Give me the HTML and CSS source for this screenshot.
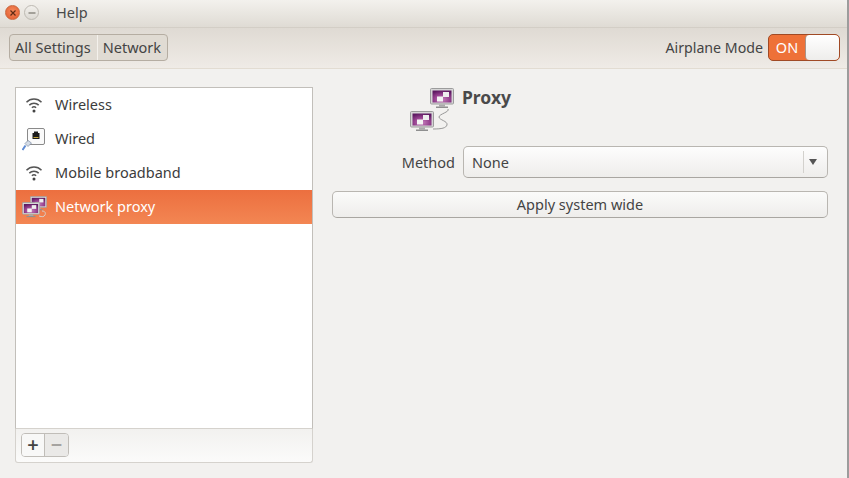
FILE: index.html
```html
<!DOCTYPE html>
<html lang="en">
<head>
<meta charset="utf-8">
<title>Network</title>
<link rel="stylesheet" href="styles.css">
</head>
<body>
<div class="window">
  <header class="titlebar">
    <span class="wbtn close"><svg width="8" height="8" viewBox="0 0 8 8"><path d="M1.500 1.500l5 5M6.500 1.500l-5 5" stroke="#5d2a14" stroke-width="1.200"/></svg></span>
    <span class="wbtn min"><svg width="8" height="8" viewBox="0 0 8 8"><path d="M0.500 4h7" stroke="#77736c" stroke-width="1.200"/></svg></span>
    <span class="menu">Help</span>
  </header>
  <div class="toolbar">
    <div class="crumbs"><span class="crumb first">All Settings</span><span class="crumb last">Network</span></div>
    <div class="airplane">
      <span class="airplane-label">Airplane Mode</span>
      <div class="switch"><span class="on">ON</span><span class="knob"></span></div>
    </div>
  </div>
  <main class="content">
    <section class="sidebar">
      <ul class="list">
        <li class="row"><span class="ico"><svg width="18" height="18" viewBox="0 0 18 18"><g fill="none" stroke="#555" stroke-width="1.500"><path d="M1.500 6.200a10.500 10.500 0 0 1 15 0"/><path d="M4.300 9.100a6.600 6.600 0 0 1 9.400 0"/><path d="M6.900 11.800a3 3 0 0 1 4.200 0"/></g><circle cx="9" cy="15" r="1.500" fill="#444"/></svg></span>Wireless</li>
        <li class="row"><span class="ico"><svg width="24" height="25" viewBox="0 0 24 25"><rect x="5.500" y="1.500" width="17" height="16" rx="1.500" fill="#fafafa" stroke="#8a8a8a"/><path d="M10.500 6h1.500V4.500h4V6h1.500v6h-7z" fill="#1c1c1c"/><path d="M11.500 10.500h5" stroke="#c9a93a"/><path d="M6 13.500l-3 3 3 3 3.500-3.500z" fill="#d5dce6" stroke="#7b8ba3" stroke-width=".7"/><path d="M3.500 18.500l-3 4.500" stroke="#5f8bd3" stroke-width="2"/></svg></span>Wired</li>
        <li class="row"><span class="ico"><svg width="18" height="18" viewBox="0 0 18 18"><g fill="none" stroke="#555" stroke-width="1.500"><path d="M1.500 6.200a10.500 10.500 0 0 1 15 0"/><path d="M4.300 9.100a6.600 6.600 0 0 1 9.400 0"/><path d="M6.900 11.800a3 3 0 0 1 4.200 0"/></g><circle cx="9" cy="15" r="1.500" fill="#444"/></svg></span>Mobile broadband</li>
        <li class="row active"><span class="ico"><svg width="26" height="26" viewBox="0 0 26 26"><use href="#mon" x="9" y="2" width="17" height="15"/><path d="M21 17c3 0 4 2 3 4s-3 2-6 1" fill="none" stroke="#d8cfc9" stroke-width="1"/><use href="#mon" x="1" y="8" width="18" height="16"/></svg></span>Network proxy</li>
      </ul>
      <div class="listbar">
        <div class="pm"><span class="pm-btn add">+</span><span class="pm-btn del">−</span></div>
      </div>
    </section>
    <section class="detail">
      <div class="head">
        <svg class="bigicon" width="44" height="46" viewBox="0 0 44 46">
          <defs>
            <radialGradient id="scr" cx=".5" cy=".75" r=".75"><stop offset="0" stop-color="#c67fbc"/><stop offset=".55" stop-color="#96418f"/><stop offset="1" stop-color="#5e1a62"/></radialGradient>
            <symbol id="mon" viewBox="0 0 24 21">
              <rect x=".5" y=".5" width="23" height="15.500" rx="1" fill="#d6d6d6" stroke="#9c9c9c"/>
              <rect x="2.500" y="2.500" width="19" height="12" fill="url(#scr)"/>
              <rect x="13" y="4" width="6" height="5" fill="#eee"/>
              <rect x="7" y="8.500" width="6" height="5" fill="#f4f4f4"/>
              <rect x="9" y="16.500" width="6" height="2" fill="#aaa"/>
              <rect x="6" y="18.500" width="12" height="1.500" fill="#8f8f8f"/>
            </symbol>
          </defs>
          <use href="#mon" x="20" y="1" width="24" height="21"/>
          <path d="M38 22c2 3-9 5-9 8s9 4 8 8c-1 3-5 4-14 4" fill="none" stroke="#8d8d8d" stroke-width=".9"/>
          <use href="#mon" x="0" y="24" width="24" height="21"/>
        </svg>
        <h1 class="proxy">Proxy</h1>
      </div>
      <div class="method">
        <label class="method-label">Method</label>
        <div class="select"><span class="value">None</span><span class="sep"></span><span class="arrow"></span></div>
      </div>
      <button class="apply">Apply system wide</button>
    </section>
  </main>
</div>
</body>
</html>
```
FILE: styles.css
```css
* { box-sizing: border-box; }
html, body { margin: 0; height: 100%; }
body { background: #9c9c9c; font-family: "Noto Sans", sans-serif; font-size: 14.500px; color: #3c3c3c; overflow: hidden; }
.window { width: 847px; height: 478px; display: flex; flex-direction: column; background: #f2f1ef; }
.titlebar { height: 27px; display: flex; align-items: center; padding: 0 0 2px 5px; gap: 3px; background: linear-gradient(#f3f1ed, #dfdbd4); border-radius: 0 8px 0 0; }
.wbtn { width: 15px; height: 15px; border-radius: 50%; display: flex; align-items: center; justify-content: center; }
.close { background: radial-gradient(circle at 50% 40%, #f58a5c, #e0582a); border: 1px solid #c9673e; }
.min { background: linear-gradient(#f2f0ec, #dcd9d3); border: 1px solid #bdb9b2; margin-left: 1px; }
.menu { margin: 0 0 2px 14px; line-height: 20px; color: #4a4a4a; }
.toolbar { height: 42px; display: flex; align-items: center; justify-content: space-between; padding: 0 7px 2px 9px; background: linear-gradient(#dfdad3, #efebe6); border-top: 1px solid #d3cec6; border-bottom: 1px solid #e2dcd2; }
.crumbs { display: flex; height: 27px; border: 1px solid #b5ada2; border-radius: 4px; background: #e0dbd3; }
.crumb { padding: 0 5px; line-height: 24px; color: #444; }
.first { padding-right: 6px; }
.last { padding-right: 6px; }
.crumb + .crumb { border-left: 1px solid #f4f1ec; }
.airplane { display: flex; align-items: center; gap: 5px; color: #444; }
.airplane-label { font-size: 14.200px; }
.switch { width: 72px; height: 27px; display: flex; border: 1px solid #a04a25; border-radius: 5px; background: #ee7138; overflow: hidden; }
.on { width: 36px; text-align: center; color: #fff; line-height: 24px; }
.knob { flex: 1; background: linear-gradient(#fff, #eeedeb); border-left: 1px solid #a8948a; border-radius: 4px; }
.content { flex: 1; display: flex; padding: 18px 19px 15px 15px; gap: 19px; }
.sidebar { width: 298px; display: flex; flex-direction: column; }
.list { list-style: none; margin: 0; padding: 0; height: 342px; background: #fff; border: 1px solid #c2bfba; border-bottom-color: #d5d2cd; }
.row { height: 34px; display: flex; align-items: center; padding-bottom: 2px; color: #3c3c3c; }
.ico { width: 39px; height: 32px; display: flex; align-items: center; justify-content: center; flex: none; padding: 2px 3px 0 0; }
.active { background: linear-gradient(#ec6f3f, #f38653); color: #fff; }
.listbar { flex: 1; background: linear-gradient(#f2f1ef, #fbfbfa); border: 1px solid #d5d2cd; border-top: 0; border-radius: 0 0 3px 3px; padding: 4px 0 0 5px; }
.pm { display: flex; width: 48px; height: 24px; border: 1px solid #c0bdb8; border-radius: 4px; }
.pm-btn { width: 23px; text-align: center; font-size: 20px; font-weight: 600; line-height: 21px; }
.add { color: #444; background: #f8f8f7; border-right: 1px solid #c0bdb8; border-radius: 3px 0 0 3px; width: 23px; }
.del { color: #a5a3a0; background: #eae9e7; flex: 1; border-radius: 0 3px 3px 0; }
.detail { flex: 1; display: flex; flex-direction: column; }
.head { display: flex; height: 57px; padding-left: 78px; gap: 8px; }
.proxy { margin: 0; font-size: 17.500px; font-weight: 700; line-height: 21px; color: #4a4a4a; }
.method { display: flex; align-items: center; margin-top: 2px; height: 32px; }
.method-label { width: 131px; padding: 0 8px 0 0; text-align: right; color: #444; }
.select { flex: 1; height: 32px; display: flex; align-items: center; border: 1px solid #b9b6b1; border-bottom-color: #a9a6a1; border-radius: 5px; background: linear-gradient(#fdfdfd, #eeedeb); padding-left: 8px; }
.value { flex: 1; color: #444; }
.sep { width: 1px; height: 22px; background: #d3d1cd; }
.arrow { width: 0; height: 0; border: 4.500px solid transparent; border-top: 6px solid #555; border-bottom: 0; margin: 0 10px 0 5px; }
.apply { margin-top: 13px; height: 27px; padding: 0 0 2px; border: 1px solid #b9b6b1; border-bottom-color: #a9a6a1; border-radius: 5px; background: linear-gradient(#fbfbfa, #eeedeb); font: inherit; color: #444; }
```
